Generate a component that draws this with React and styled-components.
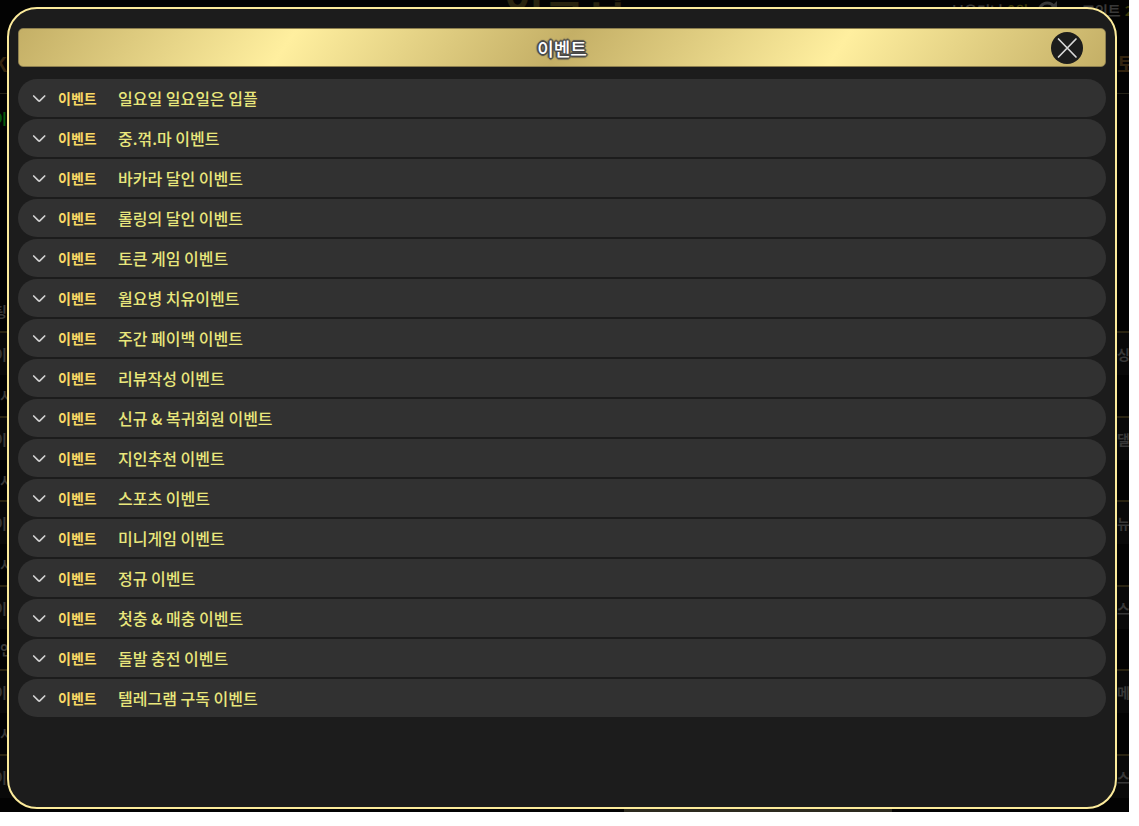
import React from 'react'
import styled, { createGlobalStyle } from 'styled-components'

const events = [
  '일요일 일요일은 입플',
  '중.꺾.마 이벤트',
  '바카라 달인 이벤트',
  '롤링의 달인 이벤트',
  '토큰 게임 이벤트',
  '월요병 치유이벤트',
  '주간 페이백 이벤트',
  '리뷰작성 이벤트',
  '신규 & 복귀회원 이벤트',
  '지인추천 이벤트',
  '스포츠 이벤트',
  '미니게임 이벤트',
  '정규 이벤트',
  '첫충 & 매충 이벤트',
  '돌발 충전 이벤트',
  '텔레그램 구독 이벤트',
]

const games = [
  { left: '이', sub: '시', right: '싱' },
  { left: '이', sub: '시', right: '댈' },
  { left: '이', sub: '시', right: '뉴' },
  { left: '이', sub: '언', right: '스' },
  { left: '이', sub: '시', right: '메' },
  { left: '이', sub: '', right: '스' },
]

const GlobalStyle = createGlobalStyle`
  * {
    box-sizing: border-box;
  }
  html {
    background-color: #ffffff;
  }
  body {
    margin: 0;
    font-family: 'Noto Sans CJK KR', 'Noto Sans', sans-serif;
  }
  button {
    font: inherit;
    border: 0;
    padding: 0;
    cursor: pointer;
  }
  h1, ul, p {
    margin: 0;
    padding: 0;
  }
`
const Screen = styled.div`
  position: relative;
  display: flex;
  flex-direction: column;
  height: calc(100vh - 14px);
  margin-right: 10px;
  padding: 7px 12px 3px 7px;
  background-color: #030303;
  overflow: hidden;
`
const Site = styled.div`
  position: absolute;
  inset: 0;
  display: flex;
  flex-direction: column;
  overflow: hidden;
  color: #383838;
  font-size: 14px;
  line-height: 20px;
  font-weight: 700;
`
const SiteTop = styled.div`
  flex: none;
  display: grid;
  grid-template-columns: 1fr 120px 1fr;
  height: 34px;
`
const Brand = styled.div`
  display: flex;
  justify-content: center;
  margin-top: -14px;
  font-size: 44px;
  line-height: 20px;
  white-space: nowrap;
  color: #29240f;
`
const Account = styled.div`
  display: flex;
  justify-content: flex-end;
  gap: 8px;
  margin-right: -4px;
  white-space: nowrap;
`
const Money = styled.span`
  display: flex;
  gap: 4px;
`
const Point = styled(Money)`
  margin-left: 16px;
`
const Gold = styled.span`
  color: #3a3708;
`
const SiteNav = styled.div`
  flex: none;
  display: flex;
  justify-content: space-between;
  align-items: center;
  height: 60px;
  border-bottom: 1px solid #262419;
  font-size: 20px;
  color: #33240f;
`
const Edge = styled.span`
  display: flex;
  justify-content: ${(props) => (props.$from === 'end' ? 'flex-end' : 'flex-start')};
  width: ${(props) => (props.$wide ? '12px' : '7px')};
  overflow: hidden;
`
const Notice = styled.div`
  flex: none;
  height: 237px;
  display: flex;
  flex-direction: column;
  justify-content: space-between;
  padding: 14px 0 10px;
`
const Ticker = styled.div`
  color: #045a0a;
`
const Game = styled.div`
  flex: none;
  height: ${(props) => (props.$tall ? '85px' : '84px')};
  border-top: 2px solid #2a2412;
`
const GameTitle = styled.div`
  display: flex;
  justify-content: space-between;
  align-items: center;
  height: 42px;
  background-color: #090909;
`
const GameSub = styled.div`
  padding-top: 10px;
`
const FooterButton = styled.div`
  position: absolute;
  bottom: 0;
  left: 55.3%;
  width: 23.7%;
  height: 6px;
  background-color: #2c2a1e;
`
const Dialog = styled.section`
  position: relative;
  flex: 1;
  display: flex;
  flex-direction: column;
  gap: 12px;
  padding: 19px 9px;
  border: 2px solid #fceb9b;
  border-radius: 30px;
  background-color: #1c1c1c;
`
const DialogHeader = styled.header`
  display: grid;
  grid-template-columns: 1fr auto 1fr;
  align-items: center;
  height: 39px;
  padding: 0 22px;
  border: 1px solid #8d7f4f;
  border-radius: 5px;
  background: linear-gradient(
    124deg,
    #c4af66 0%,
    #ffef9f 25%,
    #c4af66 50%,
    #ffef9f 75%,
    #c4af66 100%
  );
`
const Title = styled.h1`
  grid-column: 2;
  color: #ffffff;
  font-size: 18px;
  line-height: 24px;
  font-weight: 500;
  text-shadow:
    2px 0 1px #4a4a4a,
    -2px 0 1px #4a4a4a,
    0 2px 1px #4a4a4a,
    0 -2px 1px #4a4a4a,
    1px 1px 0 #4a4a4a,
    -1px 1px 0 #4a4a4a,
    1px -1px 0 #4a4a4a,
    -1px -1px 0 #4a4a4a;
`
const Close = styled.button`
  justify-self: end;
  display: flex;
  width: 32px;
  height: 32px;
  border-radius: 50%;
  background-color: #1c1c1c;
`
const EventList = styled.ul`
  display: flex;
  flex-direction: column;
  gap: 2px;
  list-style: none;
`
const EventButton = styled.button`
  display: flex;
  align-items: center;
  width: 100%;
  height: 38px;
  padding-left: 14px;
  border-radius: 19px;
  background-color: #313131;
  text-align: left;
`
const Tag = styled.span`
  width: 60px;
  margin-left: 12px;
  color: #f9d965;
  font-size: 14px;
  line-height: 20px;
  font-weight: 700;
`
const EventName = styled.span`
  color: #e9e77c;
  font-size: 16px;
  line-height: 24px;
  font-weight: 500;
`

function Chevron() {
  return (
    <svg width="14" height="10" viewBox="0 0 14 10" fill="none">
      <path
        d="M1.7 3L6.4 7.7Q7.2 8.5 8 7.7L12.7 3"
        stroke="#d2d2d2"
        strokeWidth="1.7"
        strokeLinecap="round"
      />
    </svg>
  )
}

function CloseIcon() {
  return (
    <svg width="32" height="32" viewBox="0 0 32 32" fill="none">
      <path
        d="M7.5 7L25 25M25 7L7.5 25"
        stroke="#d8d8d8"
        strokeWidth="1.7"
        strokeLinecap="round"
      />
    </svg>
  )
}

function Background() {
  return (
    <Site aria-hidden="true">
      <SiteTop>
        <span />
        <Brand>이플럽</Brand>
        <Account>
          <Money>
            <span>보유머니</span>
            <Gold>0원</Gold>
          </Money>
          <svg width="22" height="22" viewBox="0 0 22 22" fill="none">
            <path
              d="M17.5 6A8 8 0 1 0 19 13"
              stroke="#383838"
              strokeWidth="3"
            />
            <path d="M21 1V9H13Z" fill="#383838" />
          </svg>
          <Point>
            <span>포인트</span>
            <Gold>2</Gold>
          </Point>
        </Account>
      </SiteTop>
      <SiteNav>
        <Edge $from="end">K</Edge>
        <Edge $wide>토</Edge>
      </SiteNav>
      <Notice>
        <Ticker>
          <Edge $from="end">이</Edge>
        </Ticker>
        <Edge $from="end">팅</Edge>
      </Notice>
      {games.map((game, i) => (
        <Game key={i} $tall={i % 2 === 0}>
          <GameTitle>
            <Edge $from="end">{game.left}</Edge>
            <Edge $wide>{game.right}</Edge>
          </GameTitle>
          <GameSub>
            <Edge>{game.sub}</Edge>
          </GameSub>
        </Game>
      ))}
      <FooterButton />
    </Site>
  )
}

export default function App() {
  return (
    <>
      <GlobalStyle />
      <Screen>
        <Background />
        <Dialog role="dialog" aria-labelledby="dialog-title">
          <DialogHeader>
            <Title id="dialog-title">이벤트</Title>
            <Close type="button" aria-label="닫기">
              <CloseIcon />
            </Close>
          </DialogHeader>
          <EventList>
            {events.map((name) => (
              <li key={name}>
                <EventButton type="button" aria-expanded="false">
                  <Chevron />
                  <Tag>이벤트</Tag>
                  <EventName>{name}</EventName>
                </EventButton>
              </li>
            ))}
          </EventList>
        </Dialog>
      </Screen>
    </>
  )
}
